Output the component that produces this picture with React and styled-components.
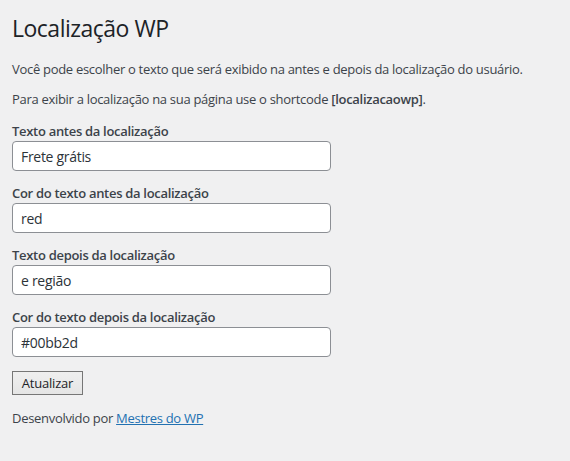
import React from "react";
import styled, { createGlobalStyle } from "styled-components";

const GlobalStyle = createGlobalStyle`
  html, body {
    margin: 0;
    background: #f0f0f1;
  }
  body {
    font-family: "Open Sans", "Noto Sans", sans-serif;
    font-size: 13px;
    color: #3c434a;
  }
`;

const fields = [
  { label: "Texto antes da localização", value: "Frete grátis" },
  { label: "Cor do texto antes da localização", value: "red" },
  { label: "Texto depois da localização", value: "e região" },
  { label: "Cor do texto depois da localização", value: "#00bb2d" },
];

const App = () => {
  return (
    <>
      <GlobalStyle />
      <StyledWrap>
        <StyledTitle>Localização WP</StyledTitle>
        <StyledText>
          Você pode escolher o texto que será exibido na antes e depois da
          localização do usuário.
        </StyledText>
        <StyledText>
          Para exibir a localização na sua página use o shortcode{" "}
          <b>[localizacaowp]</b>.
        </StyledText>
        <StyledForm>
          {fields.map((f) => (
            <StyledField key={f.label}>
              <StyledLabel>{f.label}</StyledLabel>
              <StyledInput type="text" defaultValue={f.value} />
            </StyledField>
          ))}
          <StyledButton type="button">Atualizar</StyledButton>
        </StyledForm>
        <StyledFooter>
          Desenvolvido por <StyledLink href="#">Mestres do WP</StyledLink>
        </StyledFooter>
      </StyledWrap>
    </>
  );
};

export default App;

const StyledWrap = styled.div`
  padding: 14px 12px 0 12px;
  display: flex;
  flex-direction: column;
  letter-spacing: -0.3px;
`;

const StyledTitle = styled.h1`
  margin: 0 0 17px 0;
  font-size: 23px;
  font-weight: 400;
  line-height: 29px;
  color: #1d2327;
  letter-spacing: -0.5px;
`;

const StyledText = styled.p`
  margin: 0 0 12px 0;
  line-height: 18px;

  b {
    font-weight: 600;
  }
`;

const StyledForm = styled.div`
  margin-top: 2px;
  display: flex;
  flex-direction: column;
  align-items: flex-start;
`;

const StyledField = styled.div`
  display: flex;
  flex-direction: column;
  margin-bottom: 13px;
`;

const StyledLabel = styled.label`
  font-weight: 600;
  line-height: 18px;
  margin-bottom: 1px;
  letter-spacing: -0.3px;
`;

const StyledInput = styled.input`
  box-sizing: border-box;
  width: 319px;
  height: 30px;
  padding: 0 8px;
  border: 1px solid #8c8f94;
  border-radius: 4px;
  background: #fff;
  font-family: inherit;
  font-size: 14px;
  letter-spacing: -0.3px;
  color: #2c3338;
  outline: none;
`;

const StyledButton = styled.button`
  box-sizing: border-box;
  width: 71px;
  height: 24px;
  margin-top: 1px;
  padding: 0;
  border: 1px solid #767676;
  border-radius: 0;
  background: linear-gradient(#efefef, #e5e5e5);
  font-family: inherit;
  font-size: 13px;
  letter-spacing: -0.2px;
  color: #1d2327;
  cursor: pointer;
`;

const StyledFooter = styled.p`
  margin: 14px 0 0 0;
  line-height: 18px;
`;

const StyledLink = styled.a`
  color: #2271b1;
  text-decoration: underline;
`;
